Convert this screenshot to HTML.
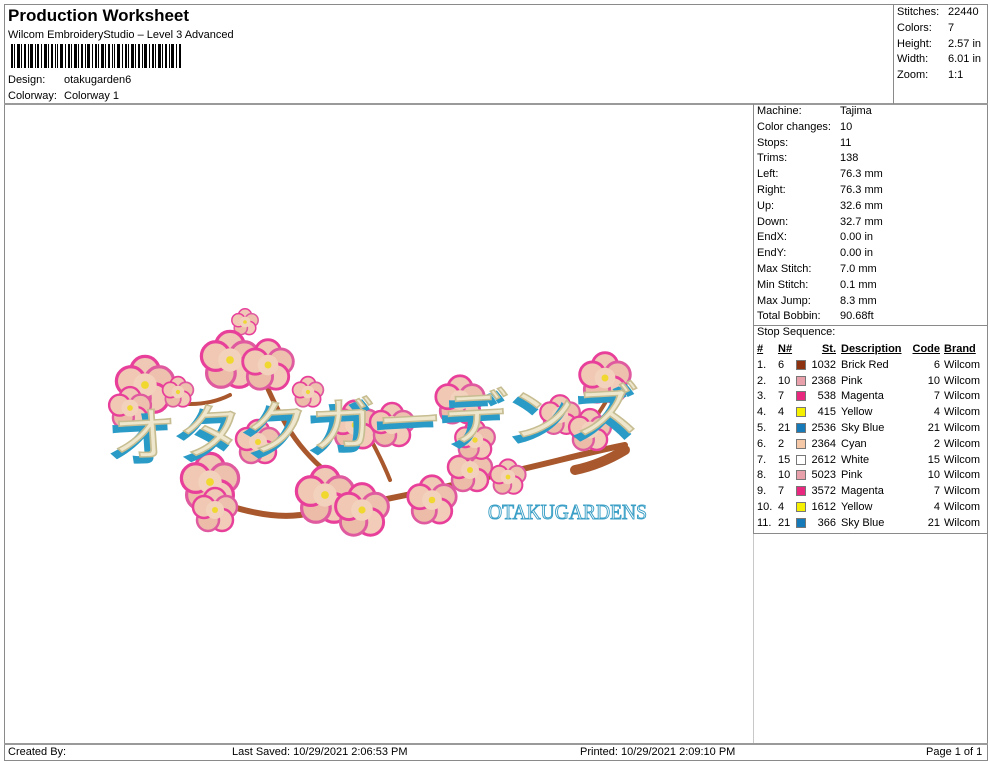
<!DOCTYPE html>
<html><head><meta charset="utf-8"><style>
*{margin:0;padding:0;box-sizing:border-box}
body{width:990px;height:762px;background:#fff;position:relative;font-family:"Liberation Sans",Arial,sans-serif;font-size:11px;color:#000;overflow:hidden}
.a{position:absolute;white-space:nowrap;line-height:14px}
.ln{position:absolute;background:#8a8a8a}
.sw{position:absolute;width:10px;height:10px;border:1px solid #777}
u{text-decoration:underline}
b{font-weight:bold}
</style></head><body>
<div class="ln" style="left:4px;top:4px;width:984px;height:1px"></div>
<div class="ln" style="left:4px;top:4px;width:1px;height:757px"></div>
<div class="ln" style="left:987px;top:4px;width:1px;height:757px"></div>
<div class="ln" style="left:4px;top:103px;width:984px;height:2px;background:#9a9a9a"></div>
<div class="ln" style="left:893px;top:4px;width:1px;height:100px"></div>
<div class="ln" style="left:753px;top:104px;width:1px;height:640px;background:#c8c8c8"></div>
<div class="ln" style="left:753px;top:104px;width:1px;height:430px"></div>
<div class="ln" style="left:753px;top:325px;width:235px;height:1px"></div>
<div class="ln" style="left:753px;top:533px;width:235px;height:1px"></div>
<div class="ln" style="left:4px;top:743px;width:984px;height:2px;background:#9a9a9a"></div>
<div class="ln" style="left:4px;top:760px;width:984px;height:1px"></div>

<div class="a" style="left:8px;top:6px;font-size:17px;font-weight:bold;line-height:20px">Production Worksheet</div>
<div class="a" style="left:8px;top:28px">Wilcom EmbroideryStudio – Level 3 Advanced</div>
<svg style="position:absolute;left:11px;top:44px" width="172" height="24">
<g fill="#000">
<rect x="0" width="2" height="24"/><rect x="3" width="1" height="24"/><rect x="6" width="3" height="24"/><rect x="10" width="1" height="24"/><rect x="13" width="2" height="24"/><rect x="17" width="1" height="24"/><rect x="19" width="3" height="24"/><rect x="24" width="1" height="24"/><rect x="26" width="2" height="24"/><rect x="30" width="1" height="24"/><rect x="33" width="3" height="24"/><rect x="37" width="1" height="24"/><rect x="40" width="2" height="24"/><rect x="44" width="1" height="24"/><rect x="46" width="1" height="24"/><rect x="49" width="3" height="24"/><rect x="54" width="1" height="24"/><rect x="57" width="2" height="24"/><rect x="60" width="1" height="24"/><rect x="63" width="3" height="24"/><rect x="67" width="1" height="24"/><rect x="70" width="2" height="24"/><rect x="74" width="1" height="24"/><rect x="76" width="3" height="24"/><rect x="81" width="1" height="24"/><rect x="84" width="2" height="24"/><rect x="87" width="1" height="24"/><rect x="90" width="3" height="24"/><rect x="94" width="1" height="24"/><rect x="97" width="2" height="24"/><rect x="101" width="1" height="24"/><rect x="103" width="1" height="24"/><rect x="106" width="3" height="24"/><rect x="111" width="1" height="24"/><rect x="114" width="2" height="24"/><rect x="117" width="1" height="24"/><rect x="120" width="3" height="24"/><rect x="124" width="1" height="24"/><rect x="127" width="2" height="24"/><rect x="131" width="1" height="24"/><rect x="133" width="3" height="24"/><rect x="138" width="1" height="24"/><rect x="141" width="2" height="24"/><rect x="144" width="1" height="24"/><rect x="147" width="3" height="24"/><rect x="151" width="1" height="24"/><rect x="154" width="2" height="24"/><rect x="158" width="1" height="24"/><rect x="160" width="3" height="24"/><rect x="165" width="1" height="24"/><rect x="168" width="2" height="24"/>
</g></svg>
<div class="a" style="left:8px;top:73px">Design:</div><div class="a" style="left:64px;top:73px">otakugarden6</div>
<div class="a" style="left:8px;top:89px">Colorway:</div><div class="a" style="left:64px;top:89px">Colorway 1</div>

<div class="a" style="left:897px;top:5px">Stitches:</div><div class="a" style="left:948px;top:5px">22440</div>
<div class="a" style="left:897px;top:21px">Colors:</div><div class="a" style="left:948px;top:21px">7</div>
<div class="a" style="left:897px;top:37px">Height:</div><div class="a" style="left:948px;top:37px">2.57 in</div>
<div class="a" style="left:897px;top:52px">Width:</div><div class="a" style="left:948px;top:52px">6.01 in</div>
<div class="a" style="left:897px;top:68px">Zoom:</div><div class="a" style="left:948px;top:68px">1:1</div>

<div class="a" style="left:757px;top:104px;line-height:15.8px">Machine:<br>Color changes:<br>Stops:<br>Trims:<br>Left:<br>Right:<br>Up:<br>Down:<br>EndX:<br>EndY:<br>Max Stitch:<br>Min Stitch:<br>Max Jump:<br>Total Bobbin:<br>Stop Sequence:</div>
<div class="a" style="left:840px;top:104px;line-height:15.8px">Tajima<br>10<br>11<br>138<br>76.3 mm<br>76.3 mm<br>32.6 mm<br>32.7 mm<br>0.00 in<br>0.00 in<br>7.0 mm<br>0.1 mm<br>8.3 mm<br>90.68ft</div>

<div class="a" style="left:757px;top:342px;line-height:15.8px"><b><u>#</u></b><br>1.<br>2.<br>3.<br>4.<br>5.<br>6.<br>7.<br>8.<br>9.<br>10.<br>11.</div>
<div class="a" style="left:778px;top:342px;line-height:15.8px"><b><u>N#</u></b><br>6<br>10<br>7<br>4<br>21<br>2<br>15<br>10<br>7<br>4<br>21</div>
<div class="a" style="left:806px;top:342px;width:30px;text-align:right;line-height:15.8px"><b><u>St.</u></b><br>1032<br>2368<br>538<br>415<br>2536<br>2364<br>2612<br>5023<br>3572<br>1612<br>366</div>
<div class="a" style="left:841px;top:342px;line-height:15.8px"><b><u>Description</u></b><br>Brick Red<br>Pink<br>Magenta<br>Yellow<br>Sky Blue<br>Cyan<br>White<br>Pink<br>Magenta<br>Yellow<br>Sky Blue</div>
<div class="a" style="left:905px;top:342px;width:35px;text-align:right;line-height:15.8px"><b><u>Code</u></b><br>6<br>10<br>7<br>4<br>21<br>2<br>15<br>10<br>7<br>4<br>21</div>
<div class="a" style="left:944px;top:342px;line-height:15.8px"><b><u>Brand</u></b><br>Wilcom<br>Wilcom<br>Wilcom<br>Wilcom<br>Wilcom<br>Wilcom<br>Wilcom<br>Wilcom<br>Wilcom<br>Wilcom<br>Wilcom</div>
<div class="sw" style="left:796px;top:360px;background:#8c3210"></div>
<div class="sw" style="left:796px;top:376px;background:#e8a0aa"></div>
<div class="sw" style="left:796px;top:391px;background:#e8287f"></div>
<div class="sw" style="left:796px;top:407px;background:#f5ef00"></div>
<div class="sw" style="left:796px;top:423px;background:#1679b8"></div>
<div class="sw" style="left:796px;top:439px;background:#f5c8a8"></div>
<div class="sw" style="left:796px;top:455px;background:#fff"></div>
<div class="sw" style="left:796px;top:470px;background:#e8a0aa"></div>
<div class="sw" style="left:796px;top:486px;background:#e8287f"></div>
<div class="sw" style="left:796px;top:502px;background:#f5ef00"></div>
<div class="sw" style="left:796px;top:518px;background:#1679b8"></div>

<div class="a" style="left:8px;top:745px">Created By:</div>
<div class="a" style="left:232px;top:745px">Last Saved: 10/29/2021 2:06:53 PM</div>
<div class="a" style="left:580px;top:745px">Printed: 10/29/2021 2:09:10 PM</div>
<div class="a" style="left:926px;top:745px">Page 1 of 1</div>

<svg style="position:absolute;left:0;top:0" width="750" height="740">
<defs>
<g id="f">
<circle cx="0" cy="-11" r="11" fill="#f0c8b6" stroke="#e8409a" stroke-width="2.5"/>
<circle cx="11" cy="-3" r="11" fill="#eec0ae" stroke="#e05aa0" stroke-width="2.5"/>
<circle cx="7" cy="10" r="11" fill="#f2ccb9" stroke="#e8409a" stroke-width="2.5"/>
<circle cx="-7" cy="10" r="11" fill="#ecbca9" stroke="#e05aa0" stroke-width="2.5"/>
<circle cx="-11" cy="-3" r="11" fill="#f1c8b4" stroke="#e8409a" stroke-width="2.5"/>
<circle cx="0" cy="0" r="9" fill="#f2d2bc"/>
<circle cx="0" cy="0" r="3" fill="#f0d830"/>
</g>
</defs>
<g stroke="#a8582c" stroke-linecap="round" fill="none">
<path d="M200 495 Q260 520 300 515 Q360 505 430 490 Q520 470 560 460 Q600 450 625 445" stroke-width="6"/>
<path d="M575 470 Q600 465 625 450" stroke-width="10"/>
<path d="M260 370 Q280 420 300 445 Q320 470 345 485" stroke-width="5"/>
<path d="M360 420 Q380 455 390 480" stroke-width="4"/>
<path d="M160 400 Q200 410 230 395" stroke-width="4"/>
<path d="M580 440 Q595 420 610 395" stroke-width="4"/>
</g>
<use href="#f" transform="translate(245,322) scale(0.6)"/>
<use href="#f" transform="translate(230,360) scale(1.3)"/>
<use href="#f" transform="translate(268,365) scale(1.15)"/>
<use href="#f" transform="translate(145,385) scale(1.3)"/>
<use href="#f" transform="translate(130,408) scale(0.95)"/>
<use href="#f" transform="translate(178,392) scale(0.7)"/>
<use href="#f" transform="translate(308,392) scale(0.7)"/>
<use href="#f" transform="translate(258,442) scale(1.0)"/>
<use href="#f" transform="translate(210,482) scale(1.3)"/>
<use href="#f" transform="translate(215,510) scale(1.0)"/>
<use href="#f" transform="translate(325,495) scale(1.3)"/>
<use href="#f" transform="translate(362,510) scale(1.2)"/>
<use href="#f" transform="translate(355,425) scale(1.1)"/>
<use href="#f" transform="translate(392,425) scale(1.0)"/>
<use href="#f" transform="translate(432,500) scale(1.1)"/>
<use href="#f" transform="translate(460,400) scale(1.1)"/>
<use href="#f" transform="translate(470,470) scale(1.0)"/>
<use href="#f" transform="translate(475,440) scale(0.9)"/>
<use href="#f" transform="translate(508,477) scale(0.8)"/>
<use href="#f" transform="translate(560,415) scale(0.9)"/>
<use href="#f" transform="translate(605,378) scale(1.15)"/>
<use href="#f" transform="translate(590,430) scale(0.95)"/>
<g font-family="'Noto Sans CJK JP',sans-serif" font-size="58" transform="rotate(-3 380 420)">
<text x="106" y="448" fill="#2a9bc6" textLength="530" lengthAdjust="spacingAndGlyphs" stroke="#2a9bc6" stroke-width="3">オタクガーデンズ</text>
<text x="111" y="443" fill="#efe7cd" stroke="#c7bd92" stroke-width="1.5" textLength="530" lengthAdjust="spacingAndGlyphs">オタクガーデンズ</text>
</g>
<text x="488" y="519" font-family="'Liberation Serif',serif" font-size="21" fill="none" stroke="#3a9fc6" stroke-width="1" textLength="159" lengthAdjust="spacingAndGlyphs">OTAKUGARDENS</text>
</svg>
</body></html>
